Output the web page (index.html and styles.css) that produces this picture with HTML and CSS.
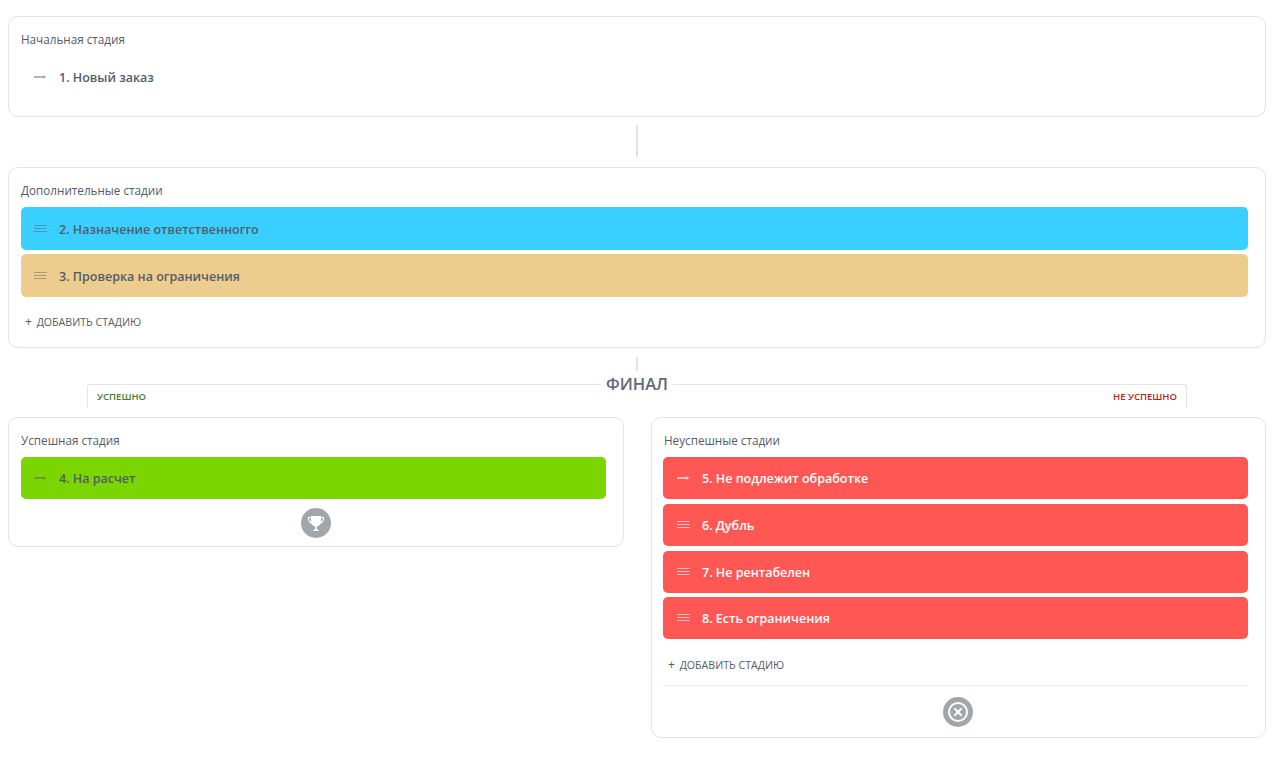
FILE: index.html
```html
<!DOCTYPE html>
<html lang="ru">
<head>
    <meta charset="UTF-8">
    <title>Стадии</title>
    <link rel="stylesheet" href="styles.css">
</head>
<body>
<div class="stages">
    <section class="card card-first">
        <div class="card-title">Начальная стадия</div>
        <div class="stage stage-plain">
            <svg class="stage-icon" viewBox="0 0 14 8"><path d="M1 3h9.500v2H1z" fill="currentColor"/><path d="M10 2l3.500 2-3.500 2z" fill="currentColor"/></svg>
            <span>1. Новый заказ</span>
        </div>
    </section>

    <div class="link link-long"></div>

    <section class="card">
        <div class="card-title">Дополнительные стадии</div>
        <div class="stage stage-blue">
            <svg class="stage-icon" viewBox="0 0 14 8"><path d="M1 .5h12.500M1 3.500h12.500M1 6.500h12.500" fill="none" stroke="currentColor"/></svg>
            <span>2. Назначение ответственногго</span>
        </div>
        <div class="stage stage-sand">
            <svg class="stage-icon" viewBox="0 0 14 8"><path d="M1 .5h12.500M1 3.500h12.500M1 6.500h12.500" fill="none" stroke="currentColor"/></svg>
            <span>3. Проверка на ограничения</span>
        </div>
        <div class="add-stage"><span class="add-plus">+</span> ДОБАВИТЬ СТАДИЮ</div>
    </section>

    <div class="link link-short"></div>

    <div class="final-tabs">
        <span class="tab-ok">УСПЕШНО</span>
        <span class="final-label">ФИНАЛ</span>
        <span class="tab-fail">НЕ УСПЕШНО</span>
    </div>

    <div class="columns">
        <section class="card card-success">
            <div class="card-title">Успешная стадия</div>
            <div class="stage stage-green">
                <svg class="stage-icon" viewBox="0 0 14 8"><path d="M1 3h9.500v2H1z" fill="currentColor"/><path d="M10 2l3.500 2-3.500 2z" fill="currentColor"/></svg>
                <span>4. На расчет</span>
            </div>
            <div class="card-foot">
                <span class="round-icon">
                    <svg viewBox="0 0 30 30" width="30" height="30">
                        <path d="M10 8h10v5c0 3.200-2.100 5.500-5 5.500s-5-2.300-5-5.500z" fill="#fff"/>
                        <path d="M10.200 9.500H7.500c0 3.500 1.500 5.500 4.500 6.300M19.800 9.500h2.700c0 3.500-1.500 5.500-4.500 6.300" fill="none" stroke="#fff" stroke-width="1.200"/>
                        <path d="M14.200 18h1.600v2.700c0 .7.900 1.100 1.900 1.300v1h-5.400v-1c1-.2 1.900-.6 1.900-1.300z" fill="#fff"/>
                    </svg>
                </span>
            </div>
        </section>

        <section class="card card-fail">
            <div class="card-title">Неуспешные стадии</div>
            <div class="stage stage-red">
                <svg class="stage-icon" viewBox="0 0 14 8"><path d="M1 3h9.500v2H1z" fill="currentColor"/><path d="M10 2l3.500 2-3.500 2z" fill="currentColor"/></svg>
                <span>5. Не подлежит обработке</span>
            </div>
            <div class="stage stage-red">
                <svg class="stage-icon" viewBox="0 0 14 8"><path d="M1 .5h12.500M1 3.500h12.500M1 6.500h12.500" fill="none" stroke="currentColor"/></svg>
                <span>6. Дубль</span>
            </div>
            <div class="stage stage-red">
                <svg class="stage-icon" viewBox="0 0 14 8"><path d="M1 .5h12.500M1 3.500h12.500M1 6.500h12.500" fill="none" stroke="currentColor"/></svg>
                <span>7. Не рентабелен</span>
            </div>
            <div class="stage stage-red">
                <svg class="stage-icon" viewBox="0 0 14 8"><path d="M1 .5h12.500M1 3.500h12.500M1 6.500h12.500" fill="none" stroke="currentColor"/></svg>
                <span>8. Есть ограничения</span>
            </div>
            <div class="add-stage add-stage-line"><span class="add-plus">+</span> ДОБАВИТЬ СТАДИЮ</div>
            <div class="card-foot">
                <span class="round-icon">
                    <svg viewBox="0 0 30 30" width="30" height="30">
                        <circle cx="15" cy="15" r="9" fill="none" stroke="#fff" stroke-width="2"/>
                        <path d="M11.300 11.300l7.400 7.400M18.700 11.300l-7.400 7.400" fill="none" stroke="#fff" stroke-width="2"/>
                    </svg>
                </span>
            </div>
        </section>
    </div>
</div>
</body>
</html>
```

FILE: styles.css
```css
* {
    box-sizing: border-box;
}

body {
    margin: 0;
    background: #fff;
    color: #535c69;
    font-family: 'Open Sans', 'Noto Sans', sans-serif;
}

.stages {
    width: 1258px;
    margin: 16px 0 0 8px;
}

.card {
    background: #fff;
    border: 1px solid #e2e3e5;
    border-radius: 10px;
    padding: 14px 17px 0 12px;
}

.card-first {
    height: 101px;
}

.card-title {
    height: 25px;
    font-size: 11.7px;
    line-height: 17px;
}

.stage {
    display: flex;
    align-items: center;
    height: 42.1px;
    margin-bottom: 4.6px;
    padding-left: 12px;
    padding-top: 1px;
    border-radius: 5px;
    font-size: 12.5px;
    font-weight: 600;
}

.stage-icon {
    flex: none;
    width: 14px;
    height: 8px;
    margin-right: 12px;
    margin-top: -1px;
    color: rgba(83, 92, 105, 0.45);
}

.stage-blue,
.stage-sand {
    height: 43px;
    margin-bottom: 4px;
}

.stage-blue {
    background: #39d0ff;
}

.stage-sand {
    background: #edcd8d;
}

.stage-green {
    background: #7bd500;
}

.stage-red {
    background: #ff5753;
    color: #fff;
}

.stage-red .stage-icon {
    color: rgba(255, 255, 255, 0.6);
}

.add-stage {
    height: 46px;
    padding: 14px 0 0 4px;
    font-size: 10.6px;
    line-height: 14px;
}

.add-plus {
    font-size: 12px;
    margin-right: 2px;
}

.add-stage-line {
    height: 42px;
    border-bottom: 1px solid #e9eaec;
}

.link {
    width: 2px;
    margin: 0 auto;
    background: #dfe3e8;
}

.link-long {
    height: 32px;
    margin-top: 8px;
    margin-bottom: 10px;
}

.link-short {
    height: 14px;
    margin-top: 9px;
}

.final-tabs {
    display: grid;
    grid-template-columns: 1fr auto 1fr;
    height: 24px;
    margin: 13px 79px 9px;
    padding: 5px 9px 0;
    border: 1px solid #e2e3e5;
    border-bottom: 0;
    border-radius: 3px 3px 0 0;
    font-size: 9.5px;
    font-weight: 600;
    line-height: 14px;
}

.final-label {
    height: 22px;
    margin-top: -17px;
    padding: 0 5px;
    background: #fff;
    font-size: 16.5px;
    font-weight: 600;
    line-height: 22px;
    color: #5f6875;
}

.tab-ok {
    color: #3f7d2e;
}

.tab-fail {
    color: #b3261e;
    text-align: right;
}

.columns {
    display: grid;
    grid-template-columns: 616px 615px;
    justify-content: space-between;
    align-items: start;
}

.card-success {
    height: 130px;
}

.card-fail {
    height: 321px;
    padding-left: 11px;
}

.card-fail .card-title {
    height: 25.3px;
    padding-left: 1px;
}

.card-fail .stage {
    padding-left: 13px;
}

.card-fail .add-stage {
    padding-left: 5px;
}

.card-foot {
    display: flex;
    justify-content: center;
    padding-left: 5px;
}

.card-success .card-foot {
    padding-top: 4px;
}

.card-fail .card-foot {
    padding-top: 11px;
}

.round-icon {
    display: block;
    width: 30px;
    height: 30px;
    border-radius: 50%;
    background: #a1a6ac;
}

.round-icon svg {
    display: block;
}
```
